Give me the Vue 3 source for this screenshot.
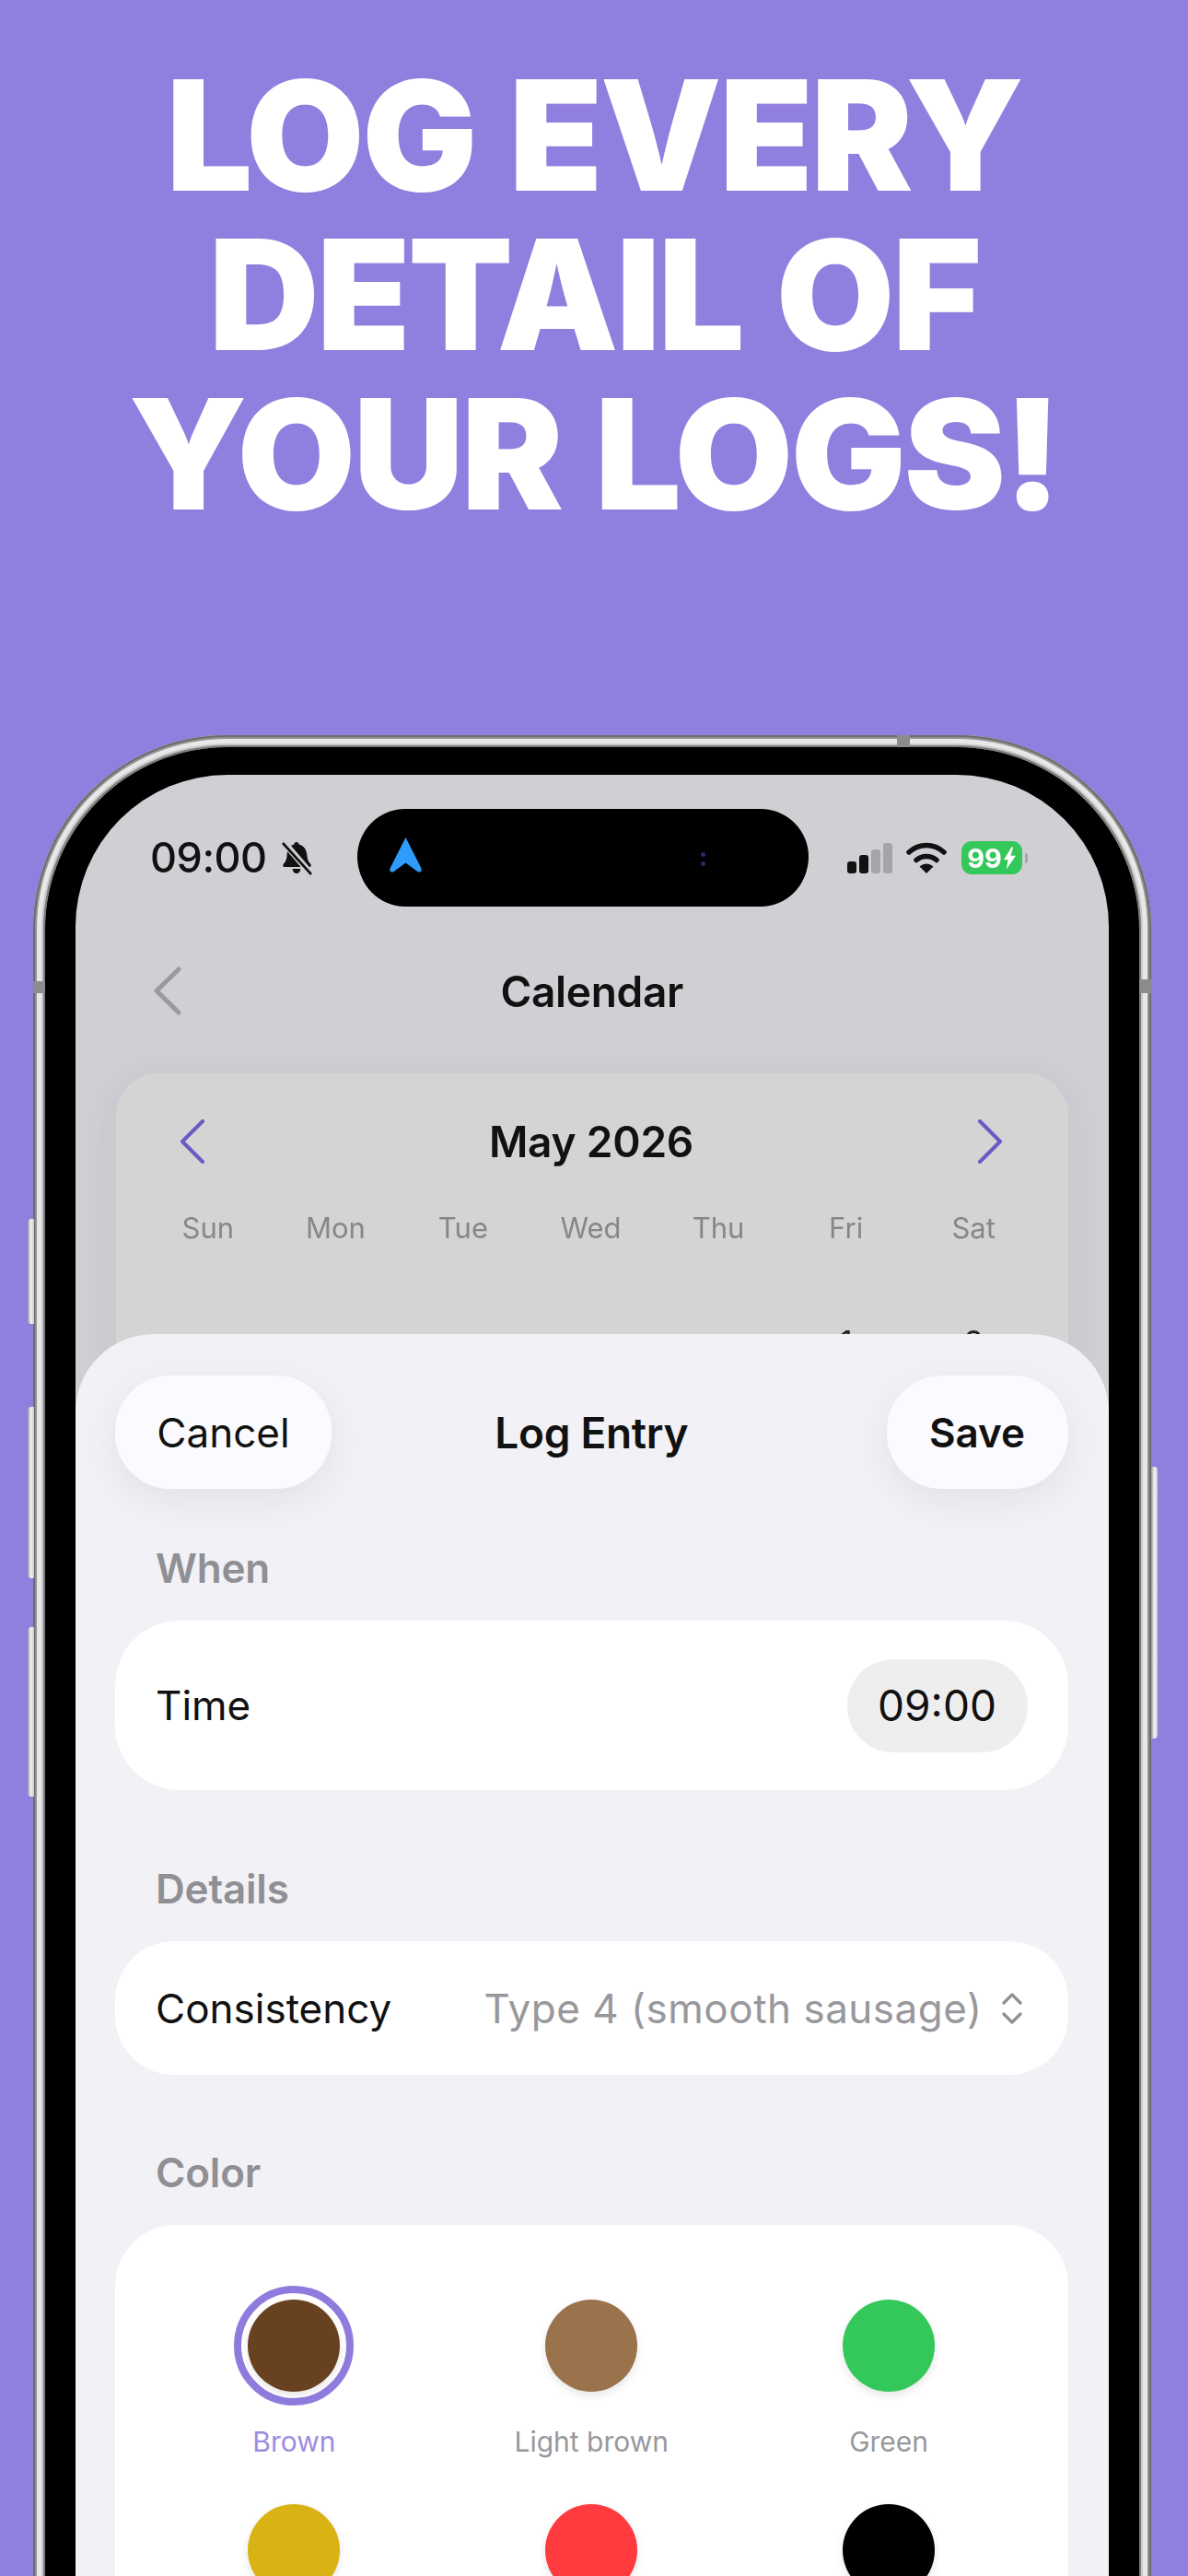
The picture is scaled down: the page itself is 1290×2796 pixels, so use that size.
<template>
  <div class="page">
    <h1 class="headline">LOG EVERY<br />DETAIL OF<br />YOUR LOGS!</h1>

    <div class="phone">
      <!-- hardware on the edge of the frame -->
      <i v-for="b in sideButtons" :key="b" class="side-btn" :class="b"></i>
      <i v-for="b in bands" :key="b" class="band" :class="b"></i>

      <div class="bezel">
        <div class="screen">
          <div class="island">
            <svg class="loc" viewBox="0 0 35 39"><path d="M17.5 0 34.5 33.5Q35.5 38 31 37.5L17.5 27.5 4 37.5Q-.5 38 .5 33.5Z" fill="#2f9bfa" /></svg>
            <span class="cam"><b></b><b></b></span>
          </div>

          <div class="status">
            <div class="status-left">
              <span class="clock">09:00</span>
              <svg class="bell" viewBox="0 0 35 37">
                <path d="M17 1c-1.6 0-2.6 1-2.6 2.6C8.500 5 7 10 6.500 16c-.3 4-1.500 6.500-3.500 8.500-1.300 1.300-.7 3.500 1 3.500h27c1.700 0 2.300-2.200 1-3.500-2-2-3.200-4.500-3.500-8.500C28 10 25.500 5 19.600 3.600 19.600 2 18.600 1 17 1Z" fill="#111" />
                <path d="M12.500 30h9c-.4 3-2.200 5-4.500 5s-4.100-2-4.500-5Z" fill="#111" />
                <path d="M3 1 33 36" stroke="#d0cfd4" stroke-width="7" />
                <path d="M2 2 33 36" stroke="#111" stroke-width="2.600" />
              </svg>
            </div>
            <div class="status-right">
              <div class="signal"><i class="s1"></i><i class="s2"></i><i class="s3"></i><i class="s4"></i></div>
              <svg class="wifi" viewBox="0 0 44 34" fill="none" stroke="#111" stroke-width="5.500" stroke-linecap="round">
                <path d="M3 11C14 1 30 1 41 11" />
                <path d="M11 19.500C17 14 27 14 33 19.500" />
                <path d="M22 34 14.500 26.500Q22 20.500 29.500 26.500Z" fill="#111" stroke="none" />
              </svg>
              <div class="battery">
                <span>99</span>
                <svg viewBox="0 0 14 26"><path d="M9 0 0 15h5l-2 11 11-16H8l3-10Z" fill="#fff" /></svg>
              </div>
              <i class="nub"></i>
            </div>
          </div>

          <div class="nav">
            <svg class="nav-back" viewBox="0 0 30 53" fill="none" stroke="#9a9a9e" stroke-width="5" stroke-linecap="round" stroke-linejoin="round">
              <path d="M27 3 3 26.500 27 50" />
            </svg>
            <span class="nav-title">Calendar</span>
          </div>

          <div class="calendar">
            <div class="month-row">
              <svg class="month-arrow" viewBox="0 0 28 48" fill="none" stroke="#6b5ac4" stroke-width="4" stroke-linecap="round" stroke-linejoin="round"><path d="M25 2 3 24l22 22" /></svg>
              <span class="month">May 2026</span>
              <svg class="month-arrow" viewBox="0 0 28 48" fill="none" stroke="#6b5ac4" stroke-width="4" stroke-linecap="round" stroke-linejoin="round"><path d="M3 2l22 22L3 46" /></svg>
            </div>
            <div class="week">
              <span v-for="d in weekdays" :key="d">{{ d }}</span>
            </div>
            <div class="days">
              <span v-for="d in firstWeek" :key="d.key">{{ d.label }}</span>
            </div>
          </div>

          <!-- bottom sheet over the calendar -->
          <div class="sheet">
            <div class="sheet-head">
              <button class="pill">Cancel</button>
              <span class="sheet-title">Log Entry</span>
              <button class="pill pill--save">Save</button>
            </div>

            <div class="section-label">When</div>
            <div class="card card--time">
              <span>Time</span>
              <span class="time-pill">09:00</span>
            </div>

            <div class="section-label">Details</div>
            <div class="card card--select">
              <span>Consistency</span>
              <span class="select-value">
                Type 4 (smooth sausage)
                <svg viewBox="0 0 26 36" fill="none" stroke="#8e8e93" stroke-width="3.200" stroke-linecap="round" stroke-linejoin="round">
                  <path d="M4 12 13 3l9 9M4 24l9 9 9-9" />
                </svg>
              </span>
            </div>

            <div class="section-label section-label--color">Color</div>
            <div class="card--colors">
              <div v-for="c in colors" :key="c.name" class="color" :class="{ 'color--on': c.selected }">
                <div class="ring"><span class="dot" :style="{ background: c.hex }"></span></div>
                <div class="color-name">{{ c.name }}</div>
              </div>
            </div>
          </div>
        </div>
      </div>
    </div>
  </div>
</template>

<script setup>
const sideButtons = ['mute', 'vol-up', 'vol-down', 'power']
const bands = ['band-left', 'band-right', 'band-top']

const weekdays = ['Sun', 'Mon', 'Tue', 'Wed', 'Thu', 'Fri', 'Sat']
const firstWeek = [
  { key: 'a', label: '' },
  { key: 'b', label: '' },
  { key: 'c', label: '' },
  { key: 'd', label: '' },
  { key: 'e', label: '' },
  { key: 'f', label: '1' },
  { key: 'g', label: '2' }
]

const colors = [
  { name: 'Brown', hex: '#674120', selected: true },
  { name: 'Light brown', hex: '#9a724b' },
  { name: 'Green', hex: '#34c759' },
  { name: 'Yellow', hex: '#d9b314' },
  { name: 'Red', hex: '#ff3b3f' },
  { name: 'Black', hex: '#000000' }
]
</script>

<style scoped>
.page {
  position: relative;
  width: 1290px;
  height: 2796px;
  overflow: hidden;
  background: #917fdf;
  font-family: Inter, "Liberation Sans", sans-serif;
  color: #111;
}

.headline {
  margin: 0;
  padding-top: 60px;
  font-size: 166px;
  line-height: 173px;
  font-weight: 900;
  letter-spacing: -2.500px;
  word-spacing: 6px;
  text-align: center;
  color: #fff;
}

.phone {
  position: relative;
  width: 1214px;
  height: 2200px;
  margin: 219px 0 0 36px;
  padding: 13px 13px 0 13px;
  box-sizing: border-box;
  border-radius: 210px;
  background: #c8c8c8;
  box-shadow: inset 0 0 0 2px #6c6c6c, inset 0 0 0 4px #929292, inset 0 0 0 9px #e8e8e8, inset 0 0 0 11px #c9c9c9, inset 0 0 0 13px #7c7c7c;
}

.side-btn {
  position: absolute;
  width: 7px;
  background: linear-gradient(90deg, #9a9a9a, #f2f2f2 50%, #c9c9c9);
  border-radius: 4px 0 0 4px;
}
.mute { left: -6px; top: 525px; height: 114px; }
.vol-up { left: -6px; top: 729px; height: 186px; }
.vol-down { left: -6px; top: 968px; height: 184px; }
.power { right: -7px; top: 794px; height: 295px; border-radius: 0 4px 4px 0; }

.band {
  position: absolute;
  background: #8c8c8c;
}
.band-left { left: 0; top: 267px; width: 13px; height: 13px; }
.band-right { right: 0; top: 265px; width: 13px; height: 15px; }
.band-top { left: 938px; top: 0; width: 14px; height: 13px; }

.bezel {
  height: 100%;
  padding: 30px 33.500px 0 33px;
  box-sizing: border-box;
  border-radius: 198px 198px 0 0;
  background: #000;
}

.screen {
  position: relative;
  height: 100%;
  overflow: hidden;
  border-radius: 165px 165px 0 0;
  background: #d0cfd4;
  filter: blur(.5px);
}

.island {
  position: absolute;
  left: 306px;
  top: 37px;
  width: 490px;
  height: 104px;
  border-radius: 52px;
  background: #000;
  box-shadow: 0 3px 0 -1px #000;
}
.loc {
  position: absolute;
  left: 35px;
  top: 31px;
  width: 35px;
  height: 39px;
}
.cam {
  position: absolute;
  left: 373px;
  top: 47px;
  display: flex;
  flex-direction: column;
  gap: 5px;
}
.cam b {
  width: 5px;
  height: 5px;
  border-radius: 50%;
  background: #2a2a6a;
}

.status {
  display: flex;
  justify-content: space-between;
  align-items: center;
  height: 80px;
  padding: 50px 88px 0 81px;
}
.status-left {
  display: flex;
  align-items: center;
  gap: 15px;
}
.clock {
  font-size: 45px;
  line-height: 50px;
  font-weight: 500;
  letter-spacing: -.5px;
}
.bell {
  width: 35px;
  height: 37px;
}
.status-right {
  display: flex;
  align-items: center;
}
.signal {
  display: flex;
  align-items: flex-end;
  gap: 3px;
  height: 33px;
}
.signal i {
  width: 10px;
  border-radius: 3px;
}
.s1 { height: 13px; background: #111; }
.s2 { height: 20px; background: #111; }
.s3 { height: 26px; background: #a5a5a9; }
.s4 { height: 33px; background: #a5a5a9; }
.wifi {
  width: 44px;
  height: 34px;
  margin: 0 16px 0 15px;
}
.battery {
  display: flex;
  align-items: center;
  justify-content: center;
  gap: 2px;
  width: 66px;
  height: 36px;
  border-radius: 11px;
  background: #34c759;
  color: #fff;
  font-size: 29px;
  font-weight: 700;
}
.battery svg {
  width: 13px;
  height: 25px;
}
.nub {
  width: 3px;
  height: 11px;
  margin-left: 3px;
  border-radius: 0 3px 3px 0;
  background: #a5a5a9;
}

.nav {
  position: relative;
  display: flex;
  justify-content: center;
  align-items: center;
  height: 60px;
  margin-top: 75px;
}
.nav-back {
  position: absolute;
  left: 85px;
  top: 3px;
  width: 30px;
  height: 53px;
}
.nav-title {
  font-size: 46px;
  font-weight: 600;
  letter-spacing: -.3px;
}

.calendar {
  height: 700px;
  margin: 59px 44px 0 43.500px;
  padding: 34px 33px 0 31px;
  box-sizing: border-box;
  border-radius: 46px;
  background: #d4d4d4;
  box-shadow: 0 8px 44px rgba(40, 40, 60, .07);
}
.month-row {
  display: flex;
  justify-content: space-between;
  align-items: center;
  height: 80px;
  padding: 0 37px 0 38px;
}
.month-arrow {
  width: 28px;
  height: 48px;
}
.month {
  font-size: 46px;
  font-weight: 600;
  letter-spacing: -.2px;
}
.week,
.days {
  display: grid;
  grid-template-columns: repeat(7, 1fr);
  text-align: center;
}
.week {
  margin-top: 34px;
  font-size: 31px;
  line-height: 40px;
  color: #87878b;
}
.days {
  margin-top: 79px;
  font-size: 36px;
  line-height: 50px;
  color: #222;
}

.sheet {
  position: absolute;
  left: 0;
  right: 0;
  top: 607px;
  bottom: 0;
  padding: 45px 44px 0 43px;
  border-radius: 85px 85px 0 0;
  background: #f1f1f6;
}
.sheet-head {
  display: grid;
  grid-template-columns: 1fr auto 1fr;
  align-items: center;
  height: 123px;
}
.pill {
  height: 123px;
  width: 235px;
  padding: 0;
  border: 0;
  border-radius: 60px;
  background: #fbfbff;
  box-shadow: 0 12px 44px rgba(0, 0, 0, .07);
  font: 400 44px Inter, "Liberation Sans", sans-serif;
  color: #111;
}
.pill--save {
  width: 197px;
  justify-self: end;
  font-weight: 600;
}
.sheet-title {
  font-size: 46px;
  font-weight: 600;
  letter-spacing: -.3px;
}

.section-label {
  margin: 80px 0 30px 44px;
  font-size: 44px;
  line-height: 54px;
  font-weight: 600;
  letter-spacing: -.2px;
  color: #8f8f94;
}
.sheet-head + .section-label {
  margin-top: 59px;
}
.section-label--color {
  margin-top: 79px;
  margin-bottom: 30px;
}

.card {
  display: flex;
  justify-content: space-between;
  align-items: center;
  padding: 0 44px;
  border-radius: 70px;
  background: #fff;
  font-size: 44px;
}
.card--time {
  height: 184px;
  padding-right: 44px;
}
.time-pill {
  display: flex;
  align-items: center;
  justify-content: center;
  width: 196px;
  height: 101px;
  border-radius: 50px;
  background: #eeeeee;
  font-size: 46px;
}
.card--select {
  height: 145px;
  padding-right: 48px;
  border-radius: 64px;
}
.select-value {
  display: flex;
  align-items: center;
  gap: 19px;
  letter-spacing: .5px;
  color: #98989c;
}
.select-value svg {
  width: 26px;
  height: 36px;
}

.card--colors {
  display: grid;
  grid-template-columns: repeat(3, 1fr);
  row-gap: 33px;
  padding: 66px 33px 60px;
  border-radius: 66px;
  background: #fff;
}
.color {
  display: flex;
  flex-direction: column;
  align-items: center;
}
.ring {
  display: flex;
  align-items: center;
  justify-content: center;
  width: 130px;
  height: 130px;
  box-sizing: border-box;
  border: 8px solid transparent;
  border-radius: 50%;
}
.color--on .ring {
  border-color: #8f7bdd;
}
.dot {
  width: 100px;
  height: 100px;
  flex: none;
  border-radius: 50%;
  box-shadow: 0 4px 10px rgba(0, 0, 0, .1);
}
.color-name {
  margin-top: 19px;
  font-size: 30px;
  line-height: 40px;
  color: #98989c;
}
.color--on .color-name {
  color: #9d8ce0;
}
</style>
